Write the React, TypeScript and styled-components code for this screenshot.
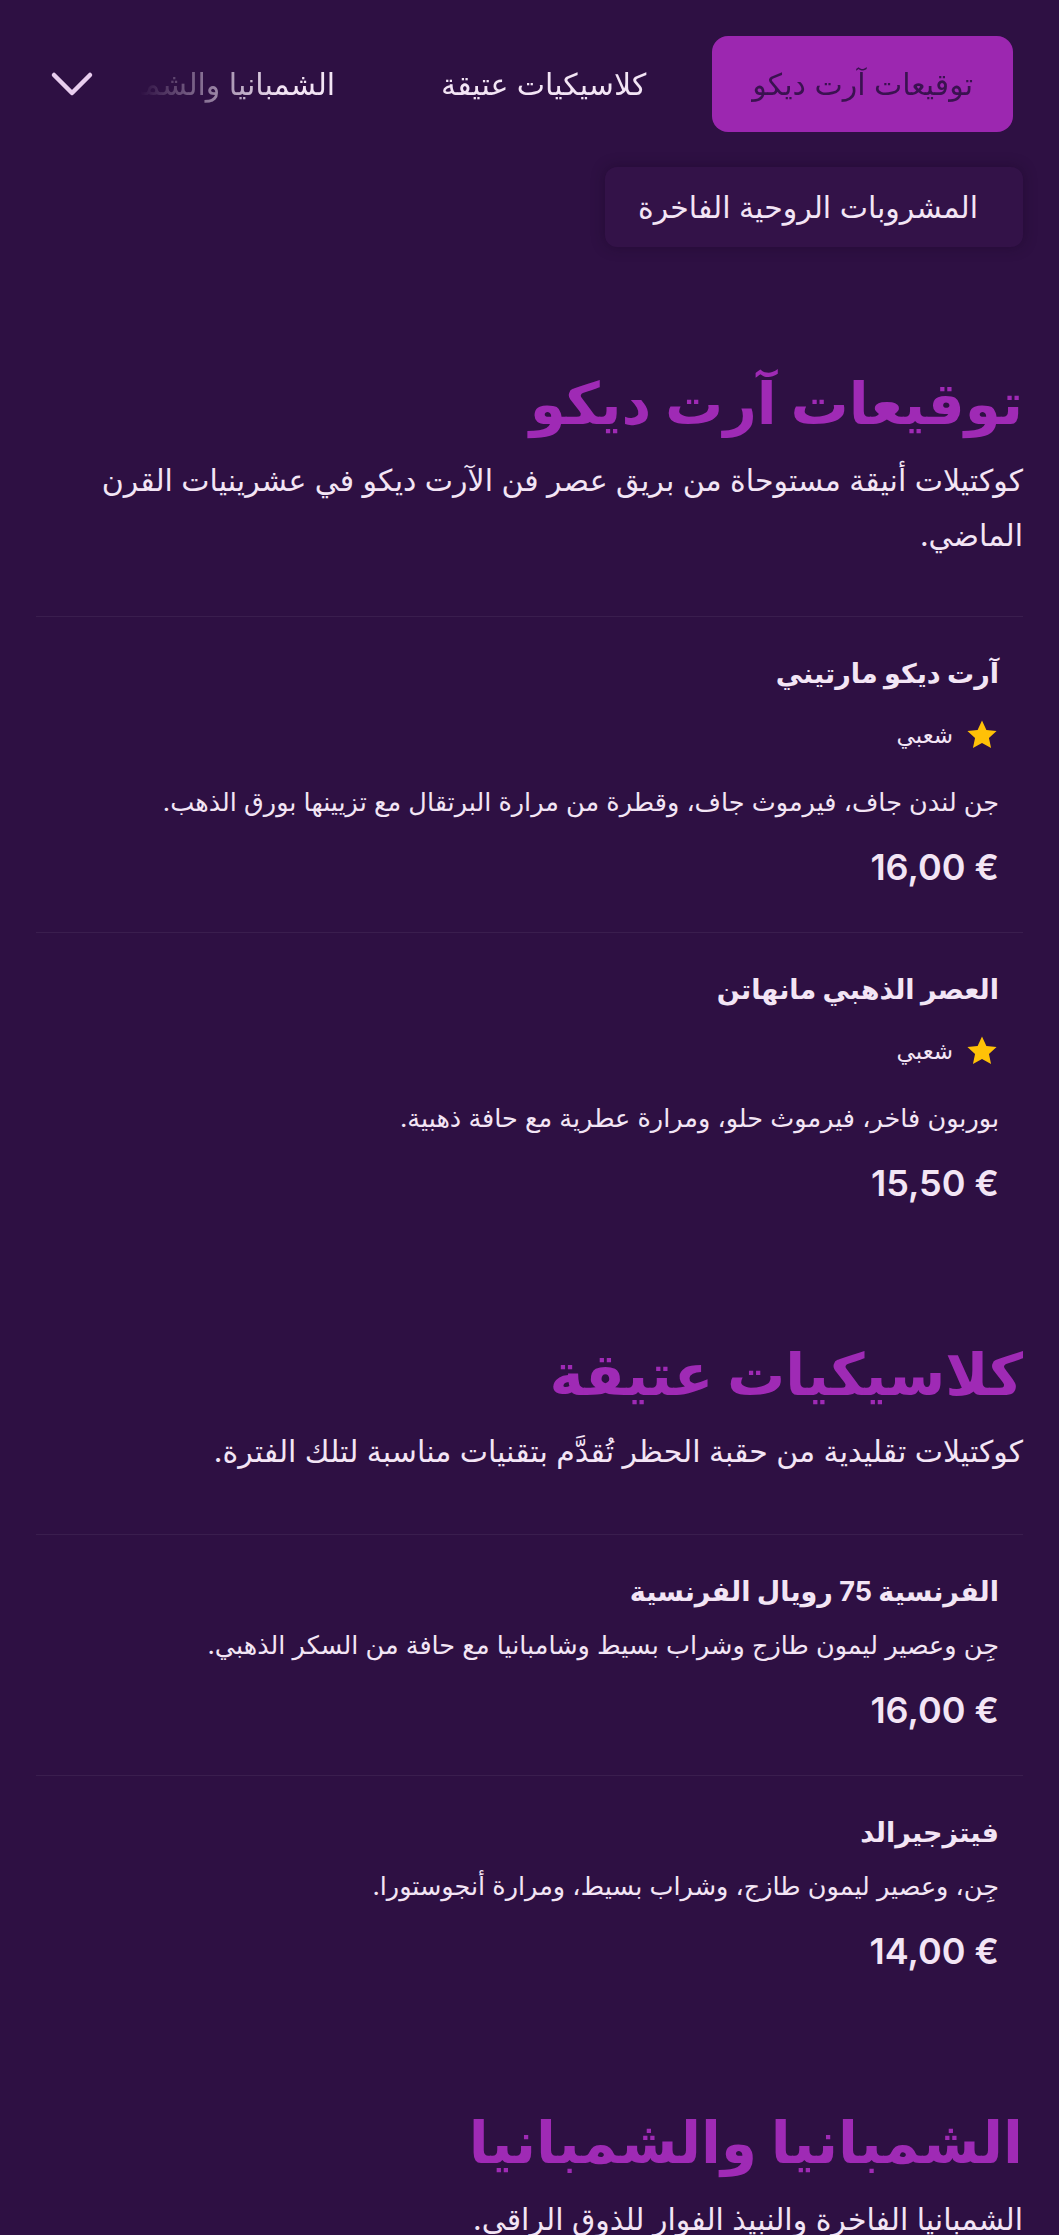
import React from "react";
import styled, { createGlobalStyle } from "styled-components";

const GlobalStyle = createGlobalStyle`
  html, body {
    margin: 0;
    padding: 0;
    background: #2e1043;
  }
  body {
    font-family: Inter, "DejaVu Sans", sans-serif;
    color: #f3e5f5;
  }
  * { box-sizing: border-box; }
`;

const Page = styled.div`
  direction: rtl;
  min-height: 2235px;
  background: #2e1043;
`;

const Nav = styled.nav`
  display: flex;
  align-items: center;
  gap: 16px;
  padding: 36px 46px 0 40px;
`;

const TabsViewport = styled.div`
  flex: 1;
  min-width: 0;
  display: flex;
  gap: 26px;
  overflow: hidden;
  -webkit-mask-image: linear-gradient(to right, transparent 20px, #000 160px);
  mask-image: linear-gradient(to right, transparent 20px, #000 160px);
`;

const Tab = styled.button<{ $active?: boolean }>`
  flex-shrink: 0;
  height: 96px;
  padding: 0 40px;
  border: none;
  border-radius: 16px;
  display: flex;
  align-items: center;
  white-space: nowrap;
  font-family: inherit;
  font-size: 30px;
  background: ${(p) => (p.$active ? "#9c27b0" : "transparent")};
  color: ${(p) => (p.$active ? "#3a1250" : "#f3e5f5")};
  cursor: pointer;
`;

const ChevronButton = styled.button`
  flex-shrink: 0;
  width: 64px;
  height: 64px;
  border: none;
  background: none;
  display: flex;
  align-items: center;
  justify-content: center;
  color: #e8cdee;
  padding: 0;
`;

const MenuRow = styled.div`
  display: flex;
  padding: 35px 36px 0;
`;

const MenuItem = styled.div`
  height: 80px;
  padding: 0 45px 0 33px;
  display: flex;
  align-items: center;
  font-size: 30px;
  white-space: nowrap;
  background: #331248;
  border-radius: 12px;
  box-shadow: 0 0 14px rgba(20, 4, 30, 0.35);
`;

const Main = styled.main`
  padding: 30px 36px 0;
`;

const Section = styled.section`
  padding-top: 91px;
`;

const Heading = styled.h2`
  margin: 0;
  font-size: 58px;
  line-height: 70px;
  font-weight: 700;
  color: #9f2ab5;
`;

const SectionDesc = styled.p`
  margin: 15px 0 0;
  font-size: 30px;
  line-height: 55px;
`;

const ItemList = styled.div<{ $gap: number }>`
  margin-top: ${(p) => p.$gap}px;
  display: flex;
  flex-direction: column;
`;

const Item = styled.article`
  border-top: 1px solid rgba(255, 255, 255, 0.06);
  padding: 36px 24px 43px;
`;

const ItemTitle = styled.h3`
  margin: 0;
  font-size: 27px;
  line-height: 42px;
  font-weight: 700;
`;

const Badge = styled.div`
  display: flex;
  align-items: center;
  gap: 12px;
  height: 36px;
  margin: 22px 0 27px;
  font-size: 23px;
`;

const ItemDesc = styled.p`
  margin: 10px 0 0;
  font-size: 25.5px;
  line-height: 43px;
`;

const Price = styled.div`
  margin-top: 23px;
  direction: ltr;
  text-align: right;
  font-family: Inter, sans-serif;
  font-weight: 600;
  font-size: 36px;
  line-height: 43px;
`;

const Star = () => (
  <svg width="34" height="34" viewBox="0 0 24 24" aria-hidden="true">
    <path
      d="M12 1.8l3.1 6.6 7.2.8-5.4 4.9 1.5 7.1L12 17.6l-6.4 3.6 1.5-7.1L1.7 9.2l7.2-.8z"
      fill="#ffc107"
    />
  </svg>
);

const Chevron = () => (
  <svg width="44" height="26" viewBox="0 0 44 26" fill="none" aria-hidden="true">
    <polyline
      points="4,4 22,22 40,4"
      stroke="currentColor"
      strokeWidth="4.5"
      strokeLinecap="round"
      strokeLinejoin="round"
    />
  </svg>
);

type Drink = { name: string; desc: string; price: string; popular?: boolean };
type Category = { title: string; desc: string; gap: number; items: Drink[] };

const categories: Category[] = [
  {
    title: "توقيعات آرت ديكو",
    desc: "كوكتيلات أنيقة مستوحاة من بريق عصر فن الآرت ديكو في عشرينيات القرن الماضي.",
    gap: 53,
    items: [
      {
        name: "آرت ديكو مارتيني",
        desc: "جن لندن جاف، فيرموث جاف، وقطرة من مرارة البرتقال مع تزيينها بورق الذهب.",
        price: "16,00 €",
        popular: true,
      },
      {
        name: "العصر الذهبي مانهاتن",
        desc: "بوربون فاخر، فيرموث حلو، ومرارة عطرية مع حافة ذهبية.",
        price: "15,50 €",
        popular: true,
      },
    ],
  },
  {
    title: "كلاسيكيات عتيقة",
    desc: "كوكتيلات تقليدية من حقبة الحظر تُقدَّم بتقنيات مناسبة لتلك الفترة.",
    gap: 55,
    items: [
      {
        name: "الفرنسية 75 رويال الفرنسية",
        desc: "جِن وعصير ليمون طازج وشراب بسيط وشامبانيا مع حافة من السكر الذهبي.",
        price: "16,00 €",
      },
      {
        name: "فيتزجيرالد",
        desc: "جِن، وعصير ليمون طازج، وشراب بسيط، ومرارة أنجوستورا.",
        price: "14,00 €",
      },
    ],
  },
  {
    title: "الشمبانيا والشمبانيا",
    desc: "الشمبانيا الفاخرة والنبيذ الفوار للذوق الراقي.",
    gap: 55,
    items: [
      {
        name: "مويت آند شاندون",
        desc: "شمبانيا فرنسية كلاسيكية بنكهات التفاح الأخضر والحمضيات.",
        price: "18,00 €",
      },
    ],
  },
];

const tabs = ["توقيعات آرت ديكو", "كلاسيكيات عتيقة", "الشمبانيا والشمبانيا"];

export default function App() {
  return (
    <Page dir="rtl">
      <GlobalStyle />
      <Nav>
        <TabsViewport>
          {tabs.map((t, i) => (
            <Tab key={t} $active={i === 0}>
              {t}
            </Tab>
          ))}
        </TabsViewport>
        <ChevronButton aria-label="المزيد">
          <Chevron />
        </ChevronButton>
      </Nav>
      <MenuRow>
        <MenuItem>المشروبات الروحية الفاخرة</MenuItem>
      </MenuRow>
      <Main>
        {categories.map((c) => (
          <Section key={c.title}>
            <Heading>{c.title}</Heading>
            <SectionDesc>{c.desc}</SectionDesc>
            <ItemList $gap={c.gap}>
              {c.items.map((d) => (
                <Item key={d.name}>
                  <ItemTitle>{d.name}</ItemTitle>
                  {d.popular && (
                    <Badge>
                      <Star />
                      <span>شعبي</span>
                    </Badge>
                  )}
                  <ItemDesc>{d.desc}</ItemDesc>
                  <Price>{d.price}</Price>
                </Item>
              ))}
            </ItemList>
          </Section>
        ))}
      </Main>
    </Page>
  );
}
